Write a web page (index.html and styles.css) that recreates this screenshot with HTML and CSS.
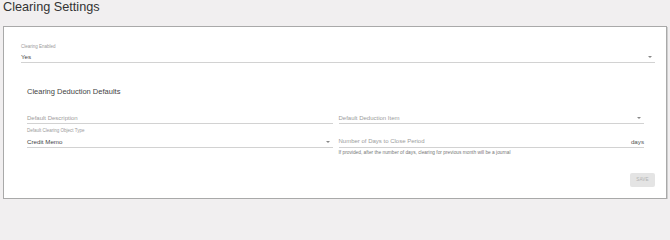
FILE: index.html
```html
<!DOCTYPE html>
<html lang="en">
<head>
<meta charset="utf-8">
<title>Clearing Settings</title>
<link rel="stylesheet" href="styles.css">
</head>
<body>
  <h1 class="page-title">Clearing Settings</h1>
  <div class="card">
    <div class="field">
      <div class="field-label">Clearing Enabled</div>
      <div class="field-input">
        <span class="value">Yes</span>
        <span class="arrow"></span>
      </div>
    </div>

    <div class="section">
      <h2 class="section-title">Clearing Deduction Defaults</h2>
      <div class="grid">
        <div class="field">
          <div class="field-input">
            <span class="placeholder">Default Description</span>
          </div>
        </div>
        <div class="field">
          <div class="field-input">
            <span class="placeholder">Default Deduction Item</span>
            <span class="arrow"></span>
          </div>
        </div>
        <div class="field row2">
          <div class="field-label">Default Clearing Object Type</div>
          <div class="field-input">
            <span class="value">Credit Memo</span>
            <span class="arrow"></span>
          </div>
        </div>
        <div class="field row2">
          <div class="field-label spacer"></div>
          <div class="field-input">
            <span class="placeholder">Number of Days to Close Period</span>
            <span class="suffix">days</span>
          </div>
          <div class="helper">If provided, after the number of days, clearing for previous month will be a journal</div>
        </div>
      </div>
    </div>

    <div class="actions">
      <button class="save-btn" disabled>SAVE</button>
    </div>
  </div>
</body>
</html>
```

FILE: styles.css
```css
html, body {
  margin: 0;
  padding: 0;
  background: #f1eff0;
  font-family: "Liberation Sans", Arial, Helvetica, sans-serif;
}

.page-title {
  margin: 0 0 11px 0;
  padding-left: 3px;
  font-size: 12.7px;
  font-weight: 400;
  line-height: 15px;
  color: #333;
}

.card {
  margin: 0 3px;
  background: #fff;
  border: 1px solid #a9a9a9;
  box-shadow: 1px 1px 0 #cfcfcf;
  padding: 17px 11px 11px 17px;
}

.field {
  display: flex;
  flex-direction: column;
}

.field-label {
  font-size: 4.5px;
  line-height: 6px;
  height: 6px;
  color: #9a9a9a;
  margin-bottom: 2px;
  white-space: nowrap;
}

.field-input {
  display: flex;
  align-items: center;
  height: 9px;
  padding-bottom: 1px;
  border-bottom: 1px solid #d2d2d2;
}

.value {
  flex: 1;
  font-size: 6.2px;
  line-height: 9px;
  color: #444;
  white-space: nowrap;
}

.placeholder {
  flex: 1;
  font-size: 6px;
  line-height: 9px;
  color: #9c9c9c;
  white-space: nowrap;
}

.suffix {
  font-size: 6.2px;
  line-height: 9px;
  color: #555;
}

.arrow {
  width: 0;
  height: 0;
  border-left: 2px solid transparent;
  border-right: 2px solid transparent;
  border-top: 2px solid #888;
  margin-right: 3px;
}

.section {
  padding: 0 0 0 6px;
  margin-right: 11px;
}

.section-title {
  margin: 24px 0 18px 0;
  font-size: 7.5px;
  line-height: 9px;
  font-weight: 400;
  color: #444;
  white-space: nowrap;
}

.grid {
  display: grid;
  grid-template-columns: 1fr 1fr;
  column-gap: 6px;
  row-gap: 4px;
}

.grid .field:not(.row2) .field-input {
  height: 8px;
}

.grid .field:not(.row2) .placeholder {
  line-height: 8px;
}

.row2 .field-label {
  margin-bottom: 3px;
}

.helper {
  margin-top: 1.5px;
  font-size: 4.8px;
  line-height: 5px;
  color: #777;
  white-space: nowrap;
}

.actions {
  display: flex;
  justify-content: flex-end;
  margin-top: 18px;
}

.save-btn {
  width: 25px;
  height: 14px;
  padding: 0;
  border: none;
  border-radius: 2px;
  background: #e4e4e4;
  color: #b3b3b3;
  font-family: "Liberation Sans", Arial, sans-serif;
  font-size: 4.6px;
  letter-spacing: 0.2px;
}
```
